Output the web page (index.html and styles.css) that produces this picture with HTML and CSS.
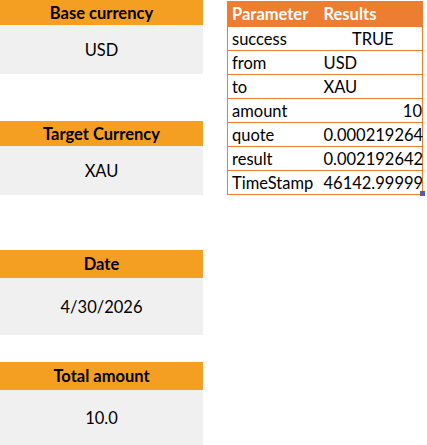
FILE: index.html
```html
<!DOCTYPE html>
<html lang="en">
<head>
    <meta charset="UTF-8">
    <title>Currency</title>
    <link rel="stylesheet" href="styles.css">
</head>
<body>
    <div class="sheet">
        <div class="left">
            <div class="card c1">
                <div class="head">Base currency</div>
                <div class="val">USD</div>
            </div>
            <div class="card c2">
                <div class="head">Target Currency</div>
                <div class="val">XAU</div>
            </div>
            <div class="card c3">
                <div class="head">Date</div>
                <div class="val">4/30/2026</div>
            </div>
            <div class="card c4">
                <div class="head">Total amount</div>
                <div class="val">10.0</div>
            </div>
        </div>
        <table class="res">
            <tr><th>Parameter</th><th>Results</th></tr>
            <tr><td>success</td><td class="mid">TRUE</td></tr>
            <tr><td>from</td><td>USD</td></tr>
            <tr><td>to</td><td>XAU</td></tr>
            <tr><td>amount</td><td class="num">10</td></tr>
            <tr><td>quote</td><td class="num">0.000219264</td></tr>
            <tr><td>result</td><td class="num">0.002192642</td></tr>
            <tr><td>TimeStamp</td><td class="num last">46142.99999<span class="handle"></span></td></tr>
        </table>
    </div>
</body>
</html>
```
FILE: styles.css
```css
*{padding: 0;
margin: 0;
box-sizing: border-box;}
body{
    font-family: Lato, "Liberation Sans", sans-serif;
    font-size: 16.5px;
    color: #000;
    background: #fff;
}
.sheet{
    display: flex;
    align-items: flex-start;
}
.left{
    width: 203px;
    display: flex;
    flex-direction: column;
}
.head{
    background: #f59f22;
    font-weight: bold;
    text-align: center;
    display: flex;
    align-items: center;
    justify-content: center;
}
.val{
    background: #f0f0f0;
    display: flex;
    align-items: center;
    justify-content: center;
}
.c1 .head, .c2 .head{height: 25px;}
.c1 .val, .c2 .val{height: 49px;}
.c2{margin-top: 47px;}
.c3{margin-top: 55px;}
.c3 .head, .c4 .head{height: 28px;}
.c3 .val{height: 57px;}
.c4{margin-top: 27px;}
.c4 .val{height: 56px;}

.res{
    margin-left: 24px;
    margin-top: 1px;
    width: 196px;
    table-layout: fixed;
    border-collapse: collapse;
    border: 1px solid #ed7d31;
}
.res th{
    background: #ed7d31;
    color: #fff;
    text-align: left;
    height: 25px;
    padding: 0 4px;
}
.res th:first-child{width: 94px;}
.res td{
    height: 24px;
    border-top: 1px solid #ed7d31;
    padding: 0 4px;
    white-space: nowrap;
    overflow: visible;
}
.res td + td, .res th + th{padding-left: 2px; padding-right: 0;}
.res .mid{text-align: center;}
.res .num{text-align: right;}
.last{position: relative;}
.handle{
    position: absolute;
    right: -3px;
    bottom: -2px;
    width: 5px;
    height: 5px;
    background: #4f5fb0;
}
```
